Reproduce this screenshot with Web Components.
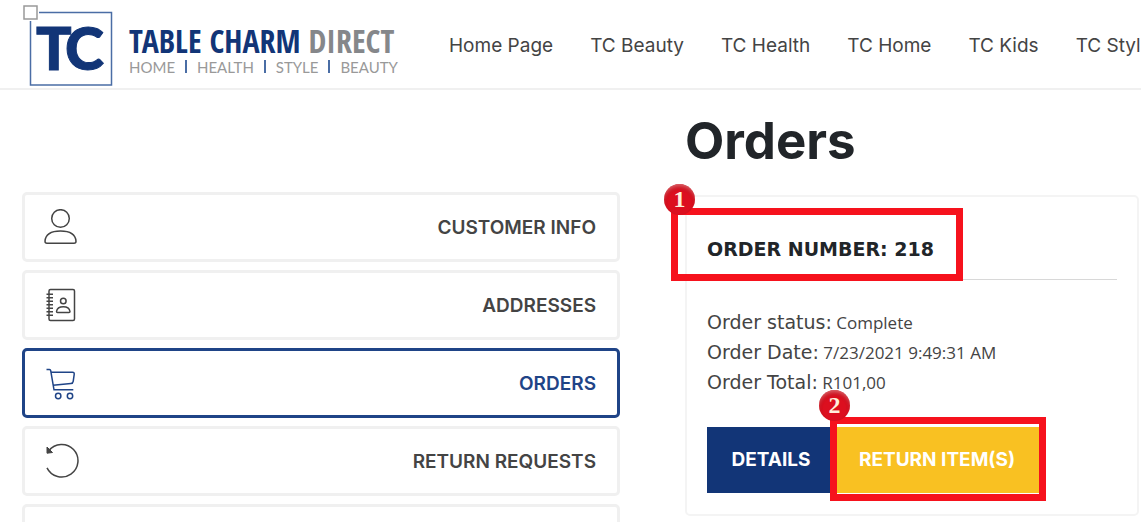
<!DOCTYPE html>
<html lang="en">
<head>
<meta charset="utf-8">
<title>Orders</title>
<style>
  body {
    margin: 0;
    height: 100vh;
    overflow: hidden;
    background: #fff;
    color: #212529;
    font-family: Inter, "Open Sans", sans-serif;
  }
</style>
</head>
<body>
<account-page>
  <site-header slot="header"></site-header>

  <account-menu slot="menu">
    <menu-item icon="person">CUSTOMER INFO</menu-item>
    <menu-item icon="book">ADDRESSES</menu-item>
    <menu-item icon="cart" active>ORDERS</menu-item>
    <menu-item icon="rotate">RETURN REQUESTS</menu-item>
    <menu-item></menu-item>
  </account-menu>

  <order-card>
    <call-out slot="title" class="title-mark" number="1">ORDER NUMBER: 218</call-out>
    <order-field label="Order status:">Complete</order-field>
    <order-field label="Order Date:">7/23/2021 9:49:31 AM</order-field>
    <order-field label="Order Total:">R101,00</order-field>
    <action-button slot="actions">DETAILS</action-button>
    <call-out slot="actions" class="button-mark" number="2">
      <action-button kind="warning">RETURN ITEM(S)</action-button>
    </call-out>
  </order-card>
</account-page>

<script>
// page frame: header on top, menu on the left, orders on the right
class AccountPage extends HTMLElement {
  constructor() {
    super();
    const shadow = this.attachShadow({ mode: 'open' });
    shadow.innerHTML = `
    <style>
      :host {
        display: block;
      }
      .columns {
        display: grid;
        grid-template-columns: minmax(0, 598fr) minmax(0, 454fr);
        column-gap: 65px;
        padding: 0 2px 0 22px;
      }
      aside {
        padding-top: 102px;
      }
      h1 {
        margin: 20px 0 24px;
        font-size: 51px;
        line-height: 61px;
        font-weight: 700;
      }
    </style>
    <slot name="header"></slot>
    <div class="columns">
      <aside><slot name="menu"></slot></aside>
      <main>
        <h1>Orders</h1>
        <slot></slot>
      </main>
    </div>
    `;
  }
}
customElements.define('account-page', AccountPage);

// logo and top navigation
class SiteHeader extends HTMLElement {
  constructor() {
    super();
    const shadow = this.attachShadow({ mode: 'open' });
    const links = ['Home Page', 'TC Beauty', 'TC Health', 'TC Home', 'TC Kids', 'TC Style'];
    shadow.innerHTML = `
    <style>
      :host {
        display: block;
        border-bottom: 2px solid #f0f0f0;
        overflow: hidden;
      }
      header {
        display: flex;
        align-items: center;
        height: 88px;
        padding-left: 22px;
      }
      nav {
        display: flex;
        gap: 37px;
        margin-left: 48px;
        padding-top: 4px;
        white-space: nowrap;
      }
      nav a {
        color: #444;
        font-size: 19px;
        line-height: 24px;
        text-decoration: none;
      }
    </style>
    <header>
      <brand-logo></brand-logo>
      <nav>${links.map((link) => `<a href="#">${link}</a>`).join('')}</nav>
    </header>
    `;
  }
}
customElements.define('site-header', SiteHeader);

class BrandLogo extends HTMLElement {
  constructor() {
    super();
    const shadow = this.attachShadow({ mode: 'open' });
    shadow.innerHTML = `
    <style>
      :host {
        display: block;
        flex: none;
      }
      a {
        display: flex;
        align-items: center;
        gap: 15px;
        color: #123577;
        text-decoration: none;
        white-space: nowrap;
      }
      svg {
        display: block;
      }
      .mark text {
        font: 900 59px Lato, sans-serif;
        fill: #123577;
        stroke: #123577;
        stroke-width: 1;
      }
      .words {
        width: 272px;
        padding-top: 12px;
      }
      .name {
        font: 700 32px/34px "Open Sans Condensed", "Liberation Sans Narrow", "Roboto Condensed", sans-serif;
      }
      .name span {
        color: #85878a;
      }
      .tags {
        display: flex;
        justify-content: space-between;
        width: 269px;
        font: 400 15px/18px Lato, sans-serif;
        color: #999;
      }
      .tags i {
        width: 2px;
        height: 13px;
        margin-top: 2px;
        background: #4a6da5;
      }
    </style>
    <a href="#">
      <svg class="mark" width="92" height="84" viewBox="0 0 92 84">
        <rect x="8.500" y="10.500" width="81" height="72.500" fill="#fff" stroke="#4a6da5" stroke-width="1.500"/>
        <rect x="2" y="4" width="13" height="13" fill="#fff" stroke="#fff" stroke-width="4"/>
        <rect x="2" y="4" width="13" height="13" fill="#fff" stroke="#999" stroke-width="1.500"/>
        <text x="14" y="68">T<tspan x="43">C</tspan></text>
      </svg>
      <div class="words">
        <div class="name">TABLE CHARM <span>DIRECT</span></div>
        <div class="tags">HOME<i></i>HEALTH<i></i>STYLE<i></i>BEAUTY</div>
      </div>
    </a>
    `;
  }
}
customElements.define('brand-logo', BrandLogo);

class AccountMenu extends HTMLElement {
  constructor() {
    super();
    const shadow = this.attachShadow({ mode: 'open' });
    shadow.innerHTML = `
    <style>
      :host {
        display: block;
      }
      nav {
        display: flex;
        flex-direction: column;
        gap: 8px;
      }
    </style>
    <nav><slot></slot></nav>
    `;
  }
}
customElements.define('account-menu', AccountMenu);

const icons = {
  person: `
    <circle cx="17.500" cy="9.500" r="8.800"/>
    <path d="M4 34.200h27q2 0 2-2C32.500 25.500 27 22 17.500 22S2.500 25.500 2 32.200q0 2 2 2z"/>`,
  book: `
    <rect x="6" y="2.500" width="25.500" height="31" rx="1.500"/>
    <path d="M3.500 7.200h6.500M3.500 10.700h6.500M3.500 14.200h6.500M3.500 17.700h6.500M3.500 21.200h6.500M3.500 24.700h6.500M3.500 28.200h6.500"/>
    <circle cx="20.300" cy="14" r="2.800"/>
    <path d="M14.500 25.500h11.500q1 0 1-1c-.5-3-3-4.800-6.700-4.800s-6.300 1.800-6.800 4.800q0 1 1 1z"/>`,
  cart: `
    <path d="M3.500 4.500h3q1 0 1.200 1.200L11 24.800h19.300"/>
    <path d="M8 7.300h21.500q2 0 1.700 2l-1 7q-.3 2-2.300 2.200L10 20.200"/>
    <circle cx="15.200" cy="31" r="2.700"/>
    <circle cx="27" cy="31" r="2.700"/>`,
  rotate: `
    <path d="M4 24.800A16.300 16.300 0 1 0 5.800 7.700"/>
    <path d="M4 4v6.200l5.500-.7z" fill="currentColor" stroke-width="1"/>`
};

class MenuItem extends HTMLElement {
  constructor() {
    super();
    const shadow = this.attachShadow({ mode: 'open' });
    shadow.innerHTML = `
    <style>
      :host {
        display: block;
        color: #444;
      }
      :host([active]) {
        color: #1f4487;
      }
      a {
        display: flex;
        align-items: center;
        justify-content: space-between;
        box-sizing: border-box;
        min-height: 70px;
        padding: 0 21px 0 18px;
        border: 3px solid #f0f0f0;
        border-radius: 5px;
        color: inherit;
        font-size: 19px;
        line-height: 24px;
        font-weight: 600;
        text-decoration: none;
      }
      :host([active]) a {
        border-color: #1f4487;
      }
      span {
        padding-top: 2px;
      }
      svg {
        fill: none;
        stroke: currentColor;
        stroke-width: 1.5;
      }
    </style>
    <a href="#">
      <svg width="36" height="36" viewBox="0 0 36 36">${icons[this.getAttribute('icon')] || ''}</svg>
      <span><slot></slot></span>
    </a>
    `;
  }
}
customElements.define('menu-item', MenuItem);

class OrderCard extends HTMLElement {
  constructor() {
    super();
    const shadow = this.attachShadow({ mode: 'open' });
    shadow.innerHTML = `
    <style>
      :host {
        display: block;
        padding: 0 20px 21px;
        border: 2px solid #f4f4f4;
        border-radius: 5px;
      }
      h2 {
        display: flex;
        margin: 0 0 28px;
        padding: 40px 0 18px;
        border-bottom: 1px solid #d8d8d8;
        font: 700 19px/24px "DejaVu Sans", sans-serif;
        white-space: nowrap;
      }
      .actions {
        display: flex;
        margin-top: 29px;
      }
      /* the marks are wider than what they wrap */
      ::slotted(.title-mark) {
        --inset: -29px -29px -20px -36px;
        --ball-top: -31px;
        --ball-left: -14px;
      }
      ::slotted(.button-mark) {
        --inset: -10px -7px -8px -5px;
        --ball-top: -34px;
        --ball-left: -18px;
      }
    </style>
    <h2><slot name="title"></slot></h2>
    <slot></slot>
    <div class="actions"><slot name="actions"></slot></div>
    `;
  }
}
customElements.define('order-card', OrderCard);

class OrderField extends HTMLElement {
  constructor() {
    super();
    const shadow = this.attachShadow({ mode: 'open' });
    shadow.innerHTML = `
    <style>
      :host {
        display: block;
        color: #444;
        font: 400 17px/30px "Open Sans", sans-serif;
      }
      .label {
        font: 400 19px/24px "DejaVu Sans", sans-serif;
      }
    </style>
    <span class="label">${this.getAttribute('label')}</span> <slot></slot>
    `;
  }
}
customElements.define('order-field', OrderField);

class ActionButton extends HTMLElement {
  constructor() {
    super();
    const shadow = this.attachShadow({ mode: 'open' });
    shadow.innerHTML = `
    <style>
      :host {
        display: block;
      }
      button {
        display: block;
        min-width: 128px;
        height: 66px;
        padding: 0 24px;
        border: none;
        background: #123577;
        color: #fff;
        font: 700 19px/24px Inter, sans-serif;
        white-space: nowrap;
        cursor: pointer;
      }
      :host([kind="warning"]) button {
        background: #f9c122;
      }
    </style>
    <button type="button"><slot></slot></button>
    `;
  }
}
customElements.define('action-button', ActionButton);

// red frame with a numbered ball on its corner
class CallOut extends HTMLElement {
  constructor() {
    super();
    const shadow = this.attachShadow({ mode: 'open' });
    shadow.innerHTML = `
    <style>
      :host {
        display: block;
        position: relative;
      }
      .frame {
        position: absolute;
        inset: var(--inset);
        border: 7px solid #f6121d;
        pointer-events: none;
      }
      .ball {
        position: absolute;
        top: var(--ball-top);
        left: var(--ball-left);
        width: 31px;
        height: 31px;
        border-radius: 50%;
        background: radial-gradient(circle at 50% 60%, #dc0f1f 45%, #a80d18 100%);
        box-shadow: inset 0 4px 4px -2px #e06a70;
        color: #fff0dc;
        font: 700 24px/31px "Liberation Serif", serif;
        text-align: center;
      }
    </style>
    <slot></slot>
    <div class="frame"><span class="ball">${this.getAttribute('number')}</span></div>
    `;
  }
}
customElements.define('call-out', CallOut);
</script>
</body>
</html>
